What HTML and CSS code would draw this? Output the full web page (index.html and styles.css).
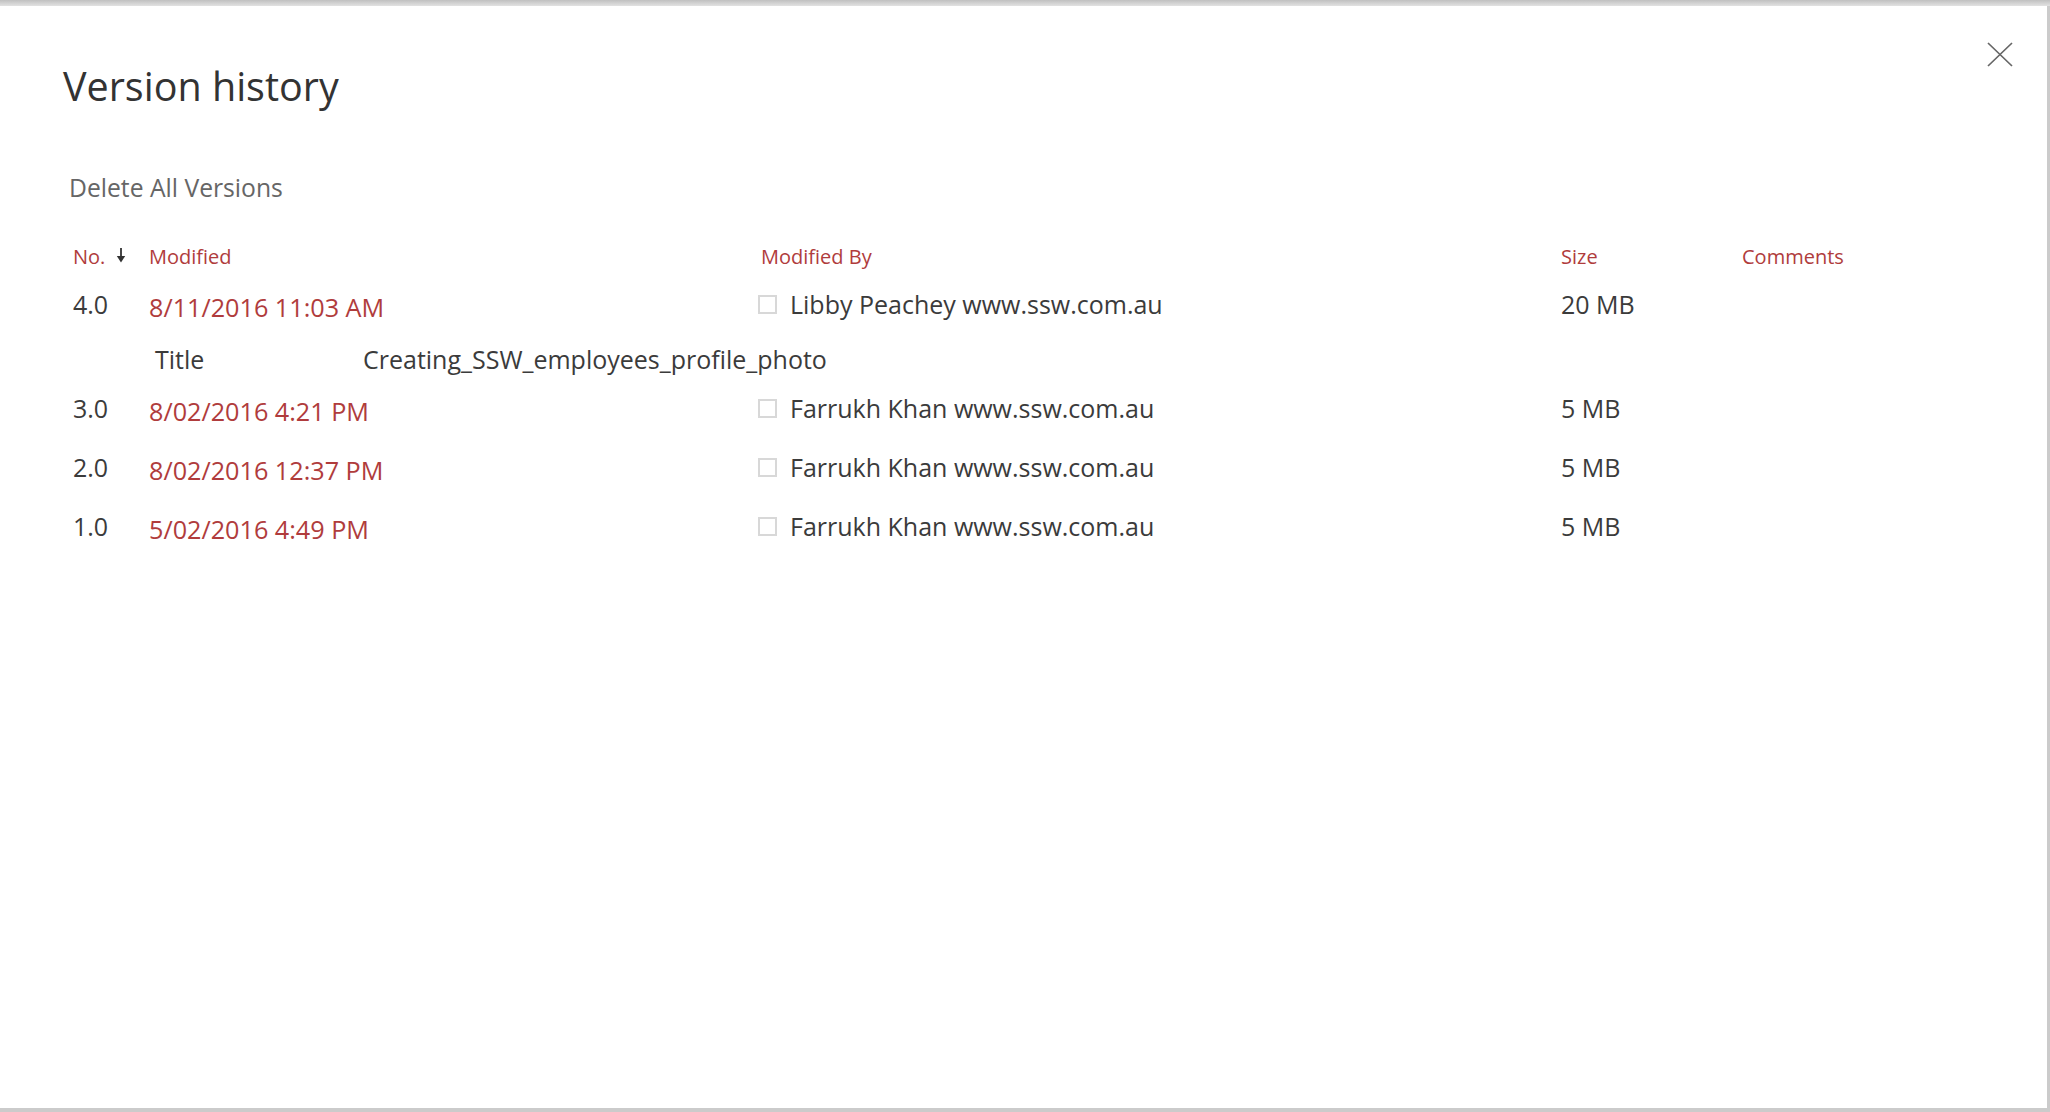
FILE: index.html
```html
<!DOCTYPE html>
<html lang="en">
<head>
<meta charset="utf-8">
<title>Version history</title>
<link rel="stylesheet" href="styles.css">
</head>
<body>
<div class="dialog">
  <button class="close" aria-label="Close">
    <svg width="26" height="25" viewBox="0 0 26 25"><path d="M1 1 L25 24 M25 1 L1 24" stroke="#666" stroke-width="1.7" fill="none"/></svg>
  </button>
  <h1 class="title">Version history</h1>
  <div class="delete-all">Delete All Versions</div>
  <div class="versions">
    <div class="row head">
      <div class="cell no-head">No. <svg class="arrow" width="10" height="15" viewBox="0 0 10 15"><path d="M5 0 V10" stroke="#333" stroke-width="1.8"/><path d="M0.8 8 H9.2 L5 14.5 Z" fill="#333"/></svg></div>
      <div class="cell">Modified</div>
      <div class="cell">Modified By</div>
      <div class="cell">Size</div>
      <div class="cell">Comments</div>
    </div>
    <div class="row">
      <div class="cell num">4.0</div>
      <div class="cell date">8/11/2016 11:03 AM</div>
      <div class="cell by"><span class="check"></span><span>Libby Peachey www.ssw.com.au</span></div>
      <div class="cell num">20 MB</div>
      <div class="cell"></div>
    </div>
    <div class="detail">
      <div class="detail-label">Title</div>
      <div class="detail-value">Creating_SSW_employees_profile_photo</div>
    </div>
    <div class="row">
      <div class="cell num">3.0</div>
      <div class="cell date">8/02/2016 4:21 PM</div>
      <div class="cell by"><span class="check"></span><span>Farrukh Khan www.ssw.com.au</span></div>
      <div class="cell num">5 MB</div>
      <div class="cell"></div>
    </div>
    <div class="row">
      <div class="cell num">2.0</div>
      <div class="cell date">8/02/2016 12:37 PM</div>
      <div class="cell by"><span class="check"></span><span>Farrukh Khan www.ssw.com.au</span></div>
      <div class="cell num">5 MB</div>
      <div class="cell"></div>
    </div>
    <div class="row">
      <div class="cell num">1.0</div>
      <div class="cell date">5/02/2016 4:49 PM</div>
      <div class="cell by"><span class="check"></span><span>Farrukh Khan www.ssw.com.au</span></div>
      <div class="cell num">5 MB</div>
      <div class="cell"></div>
    </div>
  </div>
</div>
</body>
</html>
```
FILE: styles.css
```css
html, body {
  margin: 0;
  padding: 0;
  height: 100%;
}
body {
  background: linear-gradient(#c0c0c0 0, #e2e2e2 6px, #cbcbcb 6px);
  font-family: "Open Sans", "Noto Sans", sans-serif;
  color: #3b3b3b;
  overflow: hidden;
}
.dialog {
  position: relative;
  box-sizing: border-box;
  margin: 6px 3px 0 0;
  height: 1102px;
  background: #fff;
  padding: 54px 0 0 63px;
}
.close {
  position: absolute;
  top: 36px;
  right: 34px;
  width: 26px;
  height: 25px;
  padding: 0;
  border: 0;
  background: transparent;
  display: flex;
}
.title {
  margin: 0;
  font-size: 39.5px;
  line-height: 52px;
  font-weight: 400;
  color: #333;
}
.delete-all {
  margin: 61px 0 0 6px;
  font-size: 24.7px;
  line-height: 30px;
  color: #666;
}
.versions {
  margin: 39px 0 0 10px;
}
.row {
  display: grid;
  grid-template-columns: 76px 612px 800px 181px 1fr;
  align-items: start;
  padding: 17px 0 12px;
  font-size: 25px;
  line-height: 30px;
}
.row.head {
  padding: 0;
  font-size: 20px;
  line-height: 30px;
  color: #b03c3c;
}
.no-head {
  display: flex;
  align-items: center;
  gap: 11px;
}
.arrow {
  margin-top: -4px;
}
.date {
  color: #b03c3c;
  font-size: 25.2px;
  padding-top: 3px;
  margin-bottom: -3px;
}
.by {
  display: flex;
  align-items: center;
  gap: 13px;
}
.check {
  box-sizing: border-box;
  width: 19px;
  height: 19px;
  border: 2px solid #d8d8d8;
  margin: 0 0 0 -3px;
}
.detail {
  display: flex;
  padding: 13px 0 2px 82px;
  font-size: 25px;
  line-height: 30px;
}
.detail-label {
  width: 208px;
}
```
